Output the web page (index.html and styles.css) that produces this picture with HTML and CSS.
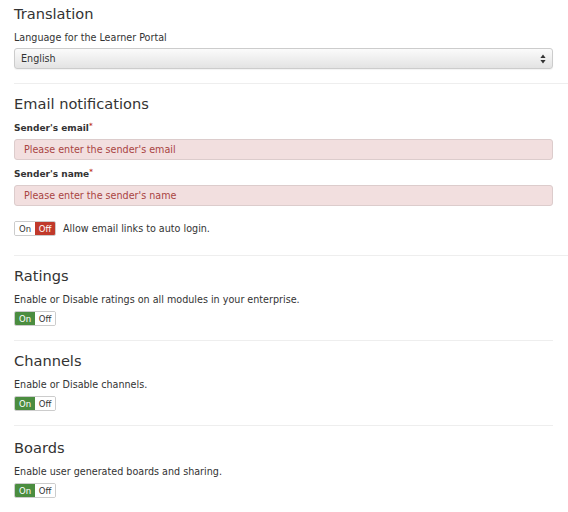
FILE: index.html
```html
<!DOCTYPE html>
<html>
<head>
<meta charset="utf-8">
<link rel="stylesheet" href="styles.css">
</head>
<body>
<div class="page">
  <section class="section">
    <h2 class="title">Translation</h2>
    <div class="desc">Language for the Learner Portal</div>
    <div class="select">
      <span>English</span>
      <svg class="arrows" width="6" height="10" viewBox="0 0 6 10"><path d="M3 0.5L5.6 4H0.4Z M3 9.5L5.6 6H0.4Z" fill="#333"/></svg>
    </div>
  </section>
  <hr class="rule rule-full">
  <section class="section">
    <h2 class="title">Email notifications</h2>
    <div class="label">Sender's email<sup class="req">*</sup></div>
    <div class="input">Please enter the sender's email</div>
    <div class="label">Sender's name<sup class="req">*</sup></div>
    <div class="input">Please enter the sender's name</div>
    <div class="toggle-row">
      <div class="toggle"><span class="opt">On</span><span class="opt off-active">Off</span></div>
      <span class="toggle-text">Allow email links to auto login.</span>
    </div>
  </section>
  <hr class="rule rule-full">
  <section class="section">
    <h2 class="title">Ratings</h2>
    <div class="desc">Enable or Disable ratings on all modules in your enterprise.</div>
    <div class="toggle"><span class="opt on-active">On</span><span class="opt">Off</span></div>
  </section>
  <hr class="rule">
  <section class="section">
    <h2 class="title">Channels</h2>
    <div class="desc">Enable or Disable channels.</div>
    <div class="toggle"><span class="opt on-active">On</span><span class="opt">Off</span></div>
  </section>
  <hr class="rule">
  <section class="section section-last">
    <h2 class="title">Boards</h2>
    <div class="desc">Enable user generated boards and sharing.</div>
    <div class="toggle"><span class="opt on-active">On</span><span class="opt">Off</span></div>
  </section>
</div>
</body>
</html>
```
FILE: styles.css
```css
* { box-sizing: border-box; }
html, body { margin: 0; padding: 0; background: #fff; }
body {
  font-family: "DejaVu Sans", sans-serif;
  color: #333;
  font-size: 9.6px;
}
.page {
  padding: 4px 0 0 14px;
}
.section {
  width: 539px;
}
.section-last { padding-top: 2px; }
.title {
  margin: 0;
  font-size: 14.6px;
  font-weight: 400;
  line-height: 20px;
  color: #333;
}
.desc {
  margin-top: 7px;
  line-height: 14px;
}
.select {
  margin-top: 3px;
  height: 21px;
  border: 1px solid #ccc;
  border-radius: 3px;
  background: linear-gradient(#fbfbfb, #e3e3e3);
  display: flex;
  align-items: center;
  justify-content: space-between;
  padding: 0 6px 0 6px;
  box-shadow: 0 1px 1px rgba(0,0,0,0.05);
}
.arrows { display: block; }
.rule {
  border: 0;
  border-top: 1px solid #eee;
  margin: 14px 0 10px 0;
  width: 539px;
}
.rule-full { width: auto; }
.label {
  margin-top: 7px;
  font-weight: 700;
  font-size: 9px;
  line-height: 14px;
}
.req {
  color: #c0392b;
  font-size: 7px;
  vertical-align: top;
  position: relative;
  top: -2px;
}
.input {
  margin-top: 4px;
  height: 21px;
  background: #f2dfdf;
  border: 1px solid #dccccc;
  border-radius: 3px;
  color: #a94442;
  display: flex;
  align-items: center;
  padding-left: 9px;
}
.toggle-row {
  margin-top: 15px;
  padding-bottom: 5px;
  display: flex;
  align-items: center;
  gap: 7px;
}
.toggle {
  display: inline-flex;
  height: 15px;
  border: 1px solid #ccc;
  border-radius: 2px;
  overflow: hidden;
  margin-top: 4px;
}
.toggle-row .toggle { margin-top: 0; }
.opt {
  width: 20px;
  display: flex;
  align-items: center;
  justify-content: center;
  font-size: 8.5px;
  color: #333;
  background: #fff;
}
.on-active { background: #4b8d40; color: #fff; }
.off-active { background: #c0392b; color: #fff; }
.toggle-text { line-height: 14px; }
```
